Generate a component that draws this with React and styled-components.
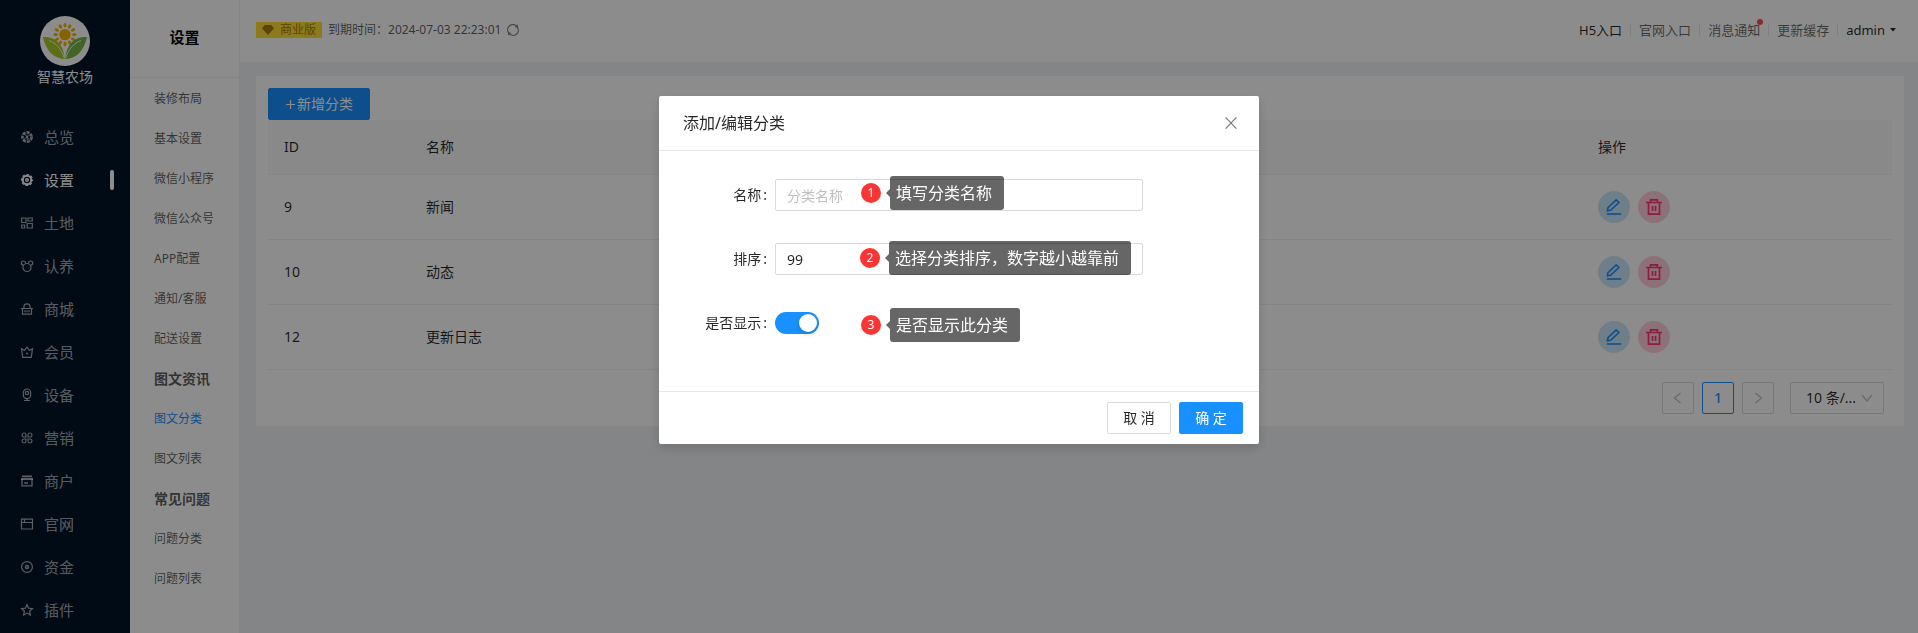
import React, { useState } from "react";
import styled, { createGlobalStyle, css } from "styled-components";

const GlobalStyle = createGlobalStyle`
  *, *::before, *::after {
    box-sizing: border-box;
  }

  body {
    margin: 0;
    background: #f0f2f5;
    color: rgba(0, 0, 0, 0.85);
    font-family: "Noto Sans", "Noto Sans CJK SC", sans-serif;
    font-size: 14px;
    line-height: 22px;
  }

  button, input, select {
    font: inherit;
    color: inherit;
  }

  ul {
    list-style: none;
    margin: 0;
    padding: 0;
  }

  a {
    color: inherit;
    text-decoration: none;
  }
`;

const petals = [0, 30, 60, 90, 120, 150, 180, 210, 240, 270, 300, 330];

const Logo = () => (
  <svg width="50" height="50" viewBox="0 0 50 50">
    <circle cx="25" cy="25" r="25" fill="#fff" />
    <circle cx="25" cy="18.6" r="5.7" fill="#f5b400" />
    {petals.map((deg) => (
      <ellipse key={deg} cx="25" cy="9.3" rx="1.5" ry="2.3" fill="#f5b400" transform={`rotate(${deg} 25 18.6)`} />
    ))}
    <path d="M2.8 21C13 20 23.500 26 24.700 43C13 42 7 36 2.800 21Z" fill="#a9c92f" />
    <path d="M47.200 21C37 20 26.500 26 25.300 43C37 42 43 36 47.200 21Z" fill="#76b843" />
    <path d="M9 24.500C16 27 21.500 33 24.300 42M41 24.500C34 27 28.500 33 25.700 42" fill="none" stroke="#fff" strokeWidth="0.9" />
  </svg>
);

const navIcons = {
  overview: (
    <>
      <circle cx="6" cy="6" r="4.6" strokeWidth="2.6" strokeDasharray="3.1 1.029" />
      <path d="M6 6L3 2.500M6 6L9.500 3.300M6 6L8.800 9.600M6 6L2.400 8.800M6 6V3.500M6 6L6.300 9" strokeWidth="0.9" />
    </>
  ),
  setting: (
    <>
      <circle cx="6" cy="6" r="4.200" strokeWidth="1.900" />
      <circle cx="6" cy="6" r="5.500" strokeWidth="1.200" strokeDasharray="2.500 1.820" strokeDashoffset="1.250" />
      <circle cx="6" cy="6" r="1.300" strokeWidth="1.400" />
    </>
  ),
  land: (
    <path d="M0.700 1H5V5.500H0.700ZM7 1H11.300V4H7ZM0.700 8H3.700V11H0.700ZM6.200 6.500H11.300V11H6.200Z" />
  ),
  adopt: (
    <>
      <circle cx="6" cy="7.500" r="4" />
      <path d="M2.300 5.200A2.100 2.100 0 1 1 4.500 3M7.500 3A2.100 2.100 0 1 1 9.700 5.200" />
    </>
  ),
  shop: <path d="M0 5.500H12M1.500 5.500V11.200H10.500V5.500M2.900 5V4A3.100 3.100 0 0 1 9.100 4V5M4 7.300V9.300M6 7.300V9.300M8 7.300V9.300" />,
  member: (
    <>
      <path d="M0.500 2.600L1.700 11.300H10.300L11.500 2.600L8.600 4.500L6 1.200L3.400 4.500Z" />
      <circle cx="6" cy="7.500" r="1" fill="currentColor" stroke="none" />
    </>
  ),
  device: (
    <>
      <rect x="2.300" y="0" width="7.400" height="9.700" rx="3.700" />
      <circle cx="6" cy="4" r="1.700" />
      <path d="M6 9.600V11.400M3 11.500H9" />
    </>
  ),
  market: (
    <path d="M5 5H2.800A2 2 0 1 1 5 2.800ZM7 5H9.200A2 2 0 1 0 7 2.800ZM5 7H2.800A2 2 0 1 0 5 9.200ZM7 7H9.200A2 2 0 1 1 7 9.200Z" />
  ),
  merchant: (
    <>
      <path d="M1 1.300H11M0 4H12" strokeWidth="1.800" />
      <path d="M1 4V10.900H11V4M3.200 8H7" strokeWidth="1.300" />
    </>
  ),
  site: <path d="M0.500 1.200H11.500V11H0.500ZM0.500 4.500H11.500M3.500 1.200V4.500" />,
  money: (
    <>
      <circle cx="6" cy="6" r="5.400" />
      <circle cx="6" cy="6" r="1.500" strokeWidth="1.500" />
    </>
  ),
  plugin: <path d="M6 0.700L7.600 4.200L11.400 4.600L8.600 7.200L9.400 11.100L6 9.100L2.600 11.100L3.400 7.200L0.600 4.600L4.400 4.200Z" />,
};

const NavIcon = ({ name }) => (
  <svg width="12" height="12" viewBox="0 0 12 12" fill="none" stroke="currentColor" strokeWidth="1.200" overflow="visible">
    {navIcons[name]}
  </svg>
);

const EditIcon = () => (
  <svg width="16" height="16" viewBox="0 0 16 16" fill="none" stroke="currentColor" strokeWidth="1.600">
    <path d="M0.800 15H15.200" />
    <path d="M1.400 11.800L2 8.700L10.200 0.900L12.900 3.500L4.600 11.300Z" />
  </svg>
);

const DeleteIcon = () => (
  <svg width="16" height="16" viewBox="0 0 16 16" fill="none" stroke="currentColor" strokeWidth="1.700">
    <path d="M0 3.500H16M4.600 3V0.800H11.400V3M2.500 3.500V15.200H13.500V3.500M6.500 7V12M9.500 7V12" />
  </svg>
);

const Chevron = ({ dir }) => {
  const paths = { left: "M8.500 1L2.500 6L8.500 11", right: "M3.500 1L9.500 6L3.500 11", down: "M1 3L6 9L11 3" };
  return (
    <svg width="12" height="12" viewBox="0 0 12 12" fill="none" stroke="currentColor" strokeWidth="1.200">
      <path d={paths[dir]} />
    </svg>
  );
};

const menus = [
  { icon: "overview", title: "总览" },
  { icon: "setting", title: "设置" },
  { icon: "land", title: "土地" },
  { icon: "adopt", title: "认养" },
  { icon: "shop", title: "商城" },
  { icon: "member", title: "会员" },
  { icon: "device", title: "设备" },
  { icon: "market", title: "营销" },
  { icon: "merchant", title: "商户" },
  { icon: "site", title: "官网" },
  { icon: "money", title: "资金" },
  { icon: "plugin", title: "插件" },
];

const subMenus = [
  { title: "装修布局" },
  { title: "基本设置" },
  { title: "微信小程序" },
  { title: "微信公众号" },
  { title: "APP配置" },
  { title: "通知/客服" },
  { title: "配送设置" },
  { title: "图文资讯", group: true },
  { title: "图文分类" },
  { title: "图文列表" },
  { title: "常见问题", group: true },
  { title: "问题分类" },
  { title: "问题列表" },
];

const rows = [
  { id: 9, name: "新闻" },
  { id: 10, name: "动态" },
  { id: 12, name: "更新日志" },
];

const TopBar = () => (
  <Header>
    <Licence>
      <Badge>
        <svg width="12" height="12" viewBox="0 0 12 12" fill="currentColor">
          <path d="M2.600 1H9.400L12 4.600L6 11L0 4.600Z" />
        </svg>
        商业版
      </Badge>
      <span>到期时间：2024-07-03 22:23:01</span>
      <IconButton aria-label="刷新">
        <svg width="12" height="12" viewBox="0 0 12 12" fill="none" stroke="currentColor" strokeWidth="1.200">
          <path d="M1.600 8.600A5.100 5.100 0 0 1 9.600 2.300M10.400 3.400A5.100 5.100 0 0 1 2.400 9.700" />
          <path d="M10.300 0.800V3H8.200M1.700 11.200V9H3.800" />
        </svg>
      </IconButton>
    </Licence>
    <Links>
      <HeaderLink href="#h5" $dark>H5入口</HeaderLink>
      <HeaderLink href="#site">官网入口</HeaderLink>
      <HeaderLink href="#message">消息通知<Dot /></HeaderLink>
      <HeaderLink href="#cache">更新缓存</HeaderLink>
      <HeaderLink href="#admin" $dark>
        admin
        <svg width="6" height="4" viewBox="0 0 6 4"><path d="M0 0H6L3 3.500Z" fill="currentColor" /></svg>
      </HeaderLink>
    </Links>
  </Header>
);

const CategoryTable = () => (
  <Table>
    <thead>
      <tr>
        <Th $width="142px">ID</Th>
        <Th>名称</Th>
        <Th $width="310px">操作</Th>
      </tr>
    </thead>
    <tbody>
      {rows.map((row) => (
        <tr key={row.id}>
          <Td>{row.id}</Td>
          <Td>{row.name}</Td>
          <Td>
            <Actions>
              <RoundButton aria-label="编辑" $color="#1890ff" $bg="#cbe8fb"><EditIcon /></RoundButton>
              <RoundButton aria-label="删除" $color="#ff3671" $bg="#ffd0db"><DeleteIcon /></RoundButton>
            </Actions>
          </Td>
        </tr>
      ))}
    </tbody>
  </Table>
);

const Tip = ({ num, left, top, children }) => (
  <TipWrap $left={left} $top={top}>
    <TipNum>{num}</TipNum>
    <TipText>{children}</TipText>
  </TipWrap>
);

const CategoryModal = () => {
  const [name, setName] = useState("");
  const [sort, setSort] = useState("99");
  const [show, setShow] = useState(true);

  return (
    <Mask>
      <Modal role="dialog" aria-labelledby="modal-title">
        <ModalHeader>
          <ModalTitle id="modal-title">添加/编辑分类</ModalTitle>
          <IconButton aria-label="关闭">
            <svg width="12" height="12" viewBox="0 0 12 12" fill="none" stroke="currentColor" strokeWidth="1.200">
              <path d="M0.600 0.300L11.400 11.700M11.400 0.300L0.600 11.700" />
            </svg>
          </IconButton>
        </ModalHeader>
        <ModalBody>
          <FormItem>
            <Label htmlFor="name">名称</Label>
            <Input id="name" placeholder="分类名称" value={name} onChange={(e) => setName(e.target.value)} />
            <Tip num="1" left="178px" top="1px">填写分类名称</Tip>
          </FormItem>
          <FormItem>
            <Label htmlFor="sort">排序</Label>
            <Input id="sort" value={sort} onChange={(e) => setSort(e.target.value)} />
            <Tip num="2" left="177px" top="2px">选择分类排序，数字越小越靠前</Tip>
          </FormItem>
          <FormItem>
            <Label htmlFor="show">是否显示</Label>
            <Switch id="show" type="checkbox" checked={show} onChange={(e) => setShow(e.target.checked)} />
            <Tip num="3" left="178px" top="5px">是否显示此分类</Tip>
          </FormItem>
        </ModalBody>
        <ModalFooter>
          <Button>取 消</Button>
          <Button $primary>确 定</Button>
        </ModalFooter>
      </Modal>
    </Mask>
  );
};

const App = () => {
  return <Layout>
    <GlobalStyle />
    <Sider>
      <Brand>
        <Logo />
        智慧农场
      </Brand>
      <ul>
        {menus.map((item) => (
          <li key={item.icon}>
            <MenuLink href={`#${item.icon}`} $active={item.icon === "setting"}>
              <NavIcon name={item.icon} />
              {item.title}
            </MenuLink>
          </li>
        ))}
      </ul>
    </Sider>
    <SubSider>
      <SubTitle>设置</SubTitle>
      <ul>
        {subMenus.map((item) => (
          <SubItem key={item.title} $group={item.group} $active={item.title === "图文分类"}>
            {item.group ? item.title : <a href="#sub">{item.title}</a>}
          </SubItem>
        ))}
      </ul>
    </SubSider>
    <Main>
      <TopBar />
      <Card>
        <Button $primary $wide>
          <svg width="11" height="11" viewBox="0 0 11 11" stroke="currentColor" strokeWidth="1.200">
            <path d="M1 5.500H10M5.500 1V10" />
          </svg>
          新增分类
        </Button>
        <CategoryTable />
        <Pagination>
          <PageButton aria-label="上一页" disabled><Chevron dir="left" /></PageButton>
          <PageButton $current>1</PageButton>
          <PageButton aria-label="下一页" disabled><Chevron dir="right" /></PageButton>
          <SizeBox>
            <SizeSelect aria-label="每页条数" defaultValue="10">
              <option value="10">10 条/...</option>
              <option value="20">20 条/...</option>
            </SizeSelect>
            <Chevron dir="down" />
          </SizeBox>
        </Pagination>
      </Card>
    </Main>
    <CategoryModal />
  </Layout>;
};

const Layout = styled.div`
  display: flex;
  min-height: 100vh;
`;

const Sider = styled.nav`
  flex: 0 0 130px;
  background: #001529;
  color: #fff;
`;

const Brand = styled.div`
  display: flex;
  flex-direction: column;
  align-items: center;
  height: 115px;
  padding-top: 16px;
`;

const MenuLink = styled.a`
  display: flex;
  align-items: center;
  gap: 11px;
  height: 43px;
  padding: 0 16px 0 21px;
  font-size: 15px;
  color: rgba(255, 255, 255, 0.65);

  ${({ $active }) => $active && css`
    color: #fff;

    &::after {
      content: "";
      width: 4px;
      height: 20px;
      margin-left: auto;
      border-radius: 2px;
      background: #fff;
    }
  `}
`;

const SubSider = styled.nav`
  flex: 0 0 110px;
  background: #fff;
  border-right: 1px solid #f0f0f0;

  ul {
    padding-top: 1px;
  }
`;

const SubTitle = styled.h2`
  margin: 0;
  height: 78px;
  border-bottom: 1px solid #f0f0f0;
  font-size: 15px;
  font-weight: 700;
  line-height: 74px;
  text-align: center;
  color: #000;
`;

const SubItem = styled.li`
  padding-left: 24px;
  line-height: 40px;
  font-size: ${({ $group }) => ($group ? "14px" : "12px")};
  font-weight: ${({ $group }) => ($group ? 700 : 400)};
  color: ${({ $active }) => ($active ? "#1890ff" : "rgba(0, 0, 0, 0.65)")};
`;

const Main = styled.main`
  flex: 1;
  min-width: 0;
`;

const Header = styled.header`
  display: flex;
  align-items: center;
  justify-content: space-between;
  height: 62px;
  padding: 0 22px 2px 16px;
  background: #fff;
`;

const Licence = styled.div`
  display: flex;
  align-items: center;
  gap: 6px;
  font-size: 12px;
  color: rgba(0, 0, 0, 0.65);
`;

const Badge = styled.span`
  display: flex;
  align-items: center;
  gap: 6px;
  padding: 0 6px;
  line-height: 16px;
  background: #fde033;
  color: #a97b12;
`;

const IconButton = styled.button`
  display: flex;
  padding: 0;
  border: 0;
  background: none;
  color: rgba(0, 0, 0, 0.5);
  cursor: pointer;
`;

const Links = styled.div`
  display: flex;
  align-items: center;
`;

const HeaderLink = styled.a`
  position: relative;
  display: flex;
  align-items: center;
  gap: 5px;
  font-size: 13px;
  line-height: 22px;
  color: ${({ $dark }) => ($dark ? "rgba(0, 0, 0, 0.85)" : "rgba(0, 0, 0, 0.6)")};

  &:not(:first-child)::before {
    content: "";
    width: 1px;
    height: 12px;
    margin: 0 3px 0 8px;
    background: #e8e8e8;
  }
`;

const Dot = styled.i`
  position: absolute;
  top: 0;
  right: -3px;
  width: 6px;
  height: 6px;
  border-radius: 50%;
  background: #ff4d4f;
`;

const Card = styled.section`
  margin: 14px 14px 0 16px;
  padding: 12px;
  background: #fff;
`;

const Button = styled.button`
  display: flex;
  align-items: center;
  justify-content: center;
  gap: 1px;
  width: ${({ $wide }) => ($wide ? "102px" : "64px")};
  height: 32px;
  padding: 0;
  border: 1px solid ${({ $primary }) => ($primary ? "#1890ff" : "#d9d9d9")};
  border-radius: 2px;
  background: ${({ $primary }) => ($primary ? "#1890ff" : "#fff")};
  color: ${({ $primary }) => ($primary ? "#fff" : "rgba(0, 0, 0, 0.85)")};
  cursor: pointer;
`;

const Table = styled.table`
  width: 100%;
  table-layout: fixed;
  border-collapse: separate;
  border-spacing: 0;
`;

const Th = styled.th`
  width: ${({ $width }) => $width || "auto"};
  height: 55px;
  padding: 0 16px;
  border-bottom: 1px solid #f0f0f0;
  background: #fafafa;
  font-weight: 400;
  text-align: left;
`;

const Td = styled.td`
  height: 65px;
  padding: 0 16px;
  border-bottom: 1px solid #f0f0f0;
`;

const Actions = styled.div`
  display: flex;
  gap: 8px;
`;

const RoundButton = styled.button`
  display: flex;
  align-items: center;
  justify-content: center;
  width: 32px;
  height: 32px;
  padding: 0;
  border: 0;
  border-radius: 50%;
  background: ${({ $bg }) => $bg};
  color: ${({ $color }) => $color};
  cursor: pointer;
`;

const Pagination = styled.div`
  display: flex;
  justify-content: flex-end;
  gap: 8px;
  padding: 12px 8px 0 0;
`;

const PageButton = styled.button`
  display: flex;
  align-items: center;
  justify-content: center;
  width: 32px;
  height: 32px;
  padding: 0;
  border: 1px solid ${({ $current }) => ($current ? "#1890ff" : "#d9d9d9")};
  border-radius: 2px;
  background: #fff;
  color: ${({ $current }) => ($current ? "#1890ff" : "rgba(0, 0, 0, 0.25)")};
  font-weight: 500;
`;

const SizeBox = styled.div`
  display: flex;
  align-items: center;
  width: 94px;
  height: 32px;
  margin-left: 8px;
  padding: 0 10px 0 15px;
  border: 1px solid #d9d9d9;
  border-radius: 2px;
  color: rgba(0, 0, 0, 0.25);
`;

const SizeSelect = styled.select`
  flex: 1;
  min-width: 0;
  padding: 0;
  border: 0;
  appearance: none;
  background: none;
  color: rgba(0, 0, 0, 0.85);
`;

const Mask = styled.div`
  position: fixed;
  inset: 0;
  display: flex;
  align-items: flex-start;
  justify-content: center;
  padding-top: 96px;
  background: rgba(0, 0, 0, 0.45);
`;

const Modal = styled.div`
  width: 600px;
  border-radius: 2px;
  background: #fff;
  box-shadow: 0 4px 12px rgba(0, 0, 0, 0.15);
`;

const ModalHeader = styled.div`
  display: flex;
  align-items: center;
  justify-content: space-between;
  padding: 16px 22px 16px 24px;
  border-bottom: 1px solid #e8e8e8;
`;

const ModalTitle = styled.h3`
  margin: 0;
  font-size: 16px;
  font-weight: 400;
  line-height: 22px;
`;

const ModalBody = styled.form`
  padding: 24px;
`;

const FormItem = styled.div`
  position: relative;
  display: grid;
  grid-template-columns: 92px 368px;
  align-items: center;
  height: 40px;
  margin-bottom: 24px;
`;

const Label = styled.label`
  padding-right: 8px;
  text-align: right;

  &::after {
    content: ":";
    margin-left: 2px;
  }
`;

const Input = styled.input`
  width: 100%;
  height: 32px;
  padding: 0 11px;
  border: 1px solid #d9d9d9;
  border-radius: 2px;
  background: #fff;
  outline: none;

  &::placeholder {
    color: #bfbfbf;
  }
`;

const Switch = styled.input`
  appearance: none;
  display: flex;
  align-items: center;
  justify-content: flex-start;
  width: 44px;
  height: 22px;
  margin: 0;
  padding: 2px;
  border-radius: 11px;
  background: rgba(0, 0, 0, 0.25);

  &::before {
    content: "";
    width: 18px;
    height: 18px;
    border-radius: 50%;
    background: #fff;
    box-shadow: 0 2px 4px rgba(0, 35, 11, 0.2);
  }

  &:checked {
    justify-content: flex-end;
    background: #1890ff;
  }
`;

const TipWrap = styled.div`
  position: absolute;
  left: ${({ $left }) => $left};
  top: ${({ $top }) => $top};
  display: flex;
  align-items: center;
  gap: 9px;
  color: #fff;
  white-space: nowrap;
`;

const TipNum = styled.span`
  width: 20px;
  border-radius: 50%;
  background: #fa3534;
  font-size: 12px;
  line-height: 20px;
  text-align: center;
`;

const TipText = styled.span`
  position: relative;
  padding: 0 12px 0 6px;
  border-radius: 3px;
  background: rgba(0, 0, 0, 0.6);
  font-size: 16px;
  line-height: 34px;

  &::before {
    content: "";
    position: absolute;
    top: 13px;
    right: 100%;
    border: 4px solid transparent;
    border-left-width: 0;
    border-right-color: rgba(0, 0, 0, 0.6);
  }
`;

const ModalFooter = styled.div`
  display: flex;
  justify-content: flex-end;
  gap: 8px;
  padding: 10px 16px;
  border-top: 1px solid #e8e8e8;
`;

export default App;
